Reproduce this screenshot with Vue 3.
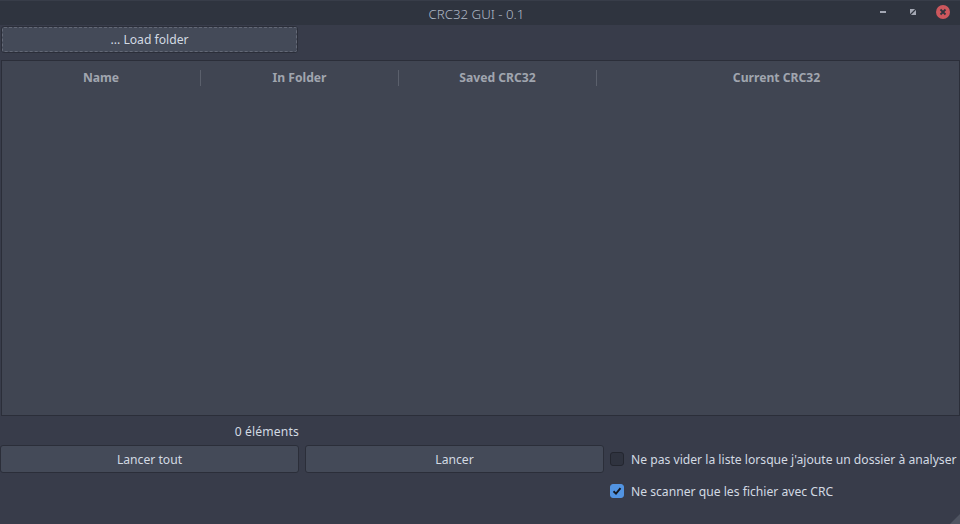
<template>
  <div class="window">
    <header class="titlebar">
      <span class="title">CRC32 GUI - 0.1</span>
      <div class="controls">
        <svg class="ctl" width="12" height="12" viewBox="0 0 12 12"><rect x="4" y="5" width="6" height="2" fill="#a3a7b3" /></svg>
        <svg class="ctl" width="12" height="12" viewBox="0 0 12 12">
          <rect x="4" y="3" width="6" height="6" fill="#a3a7b3" />
          <path d="M3.5 9.5L10.5 2.5" stroke="#2f343f" stroke-width="1.2" />
        </svg>
        <svg class="close" width="14" height="14" viewBox="0 0 14 14">
          <circle cx="7" cy="7" r="7" fill="#cc575d" />
          <path d="M4.5 4.5L9.5 9.5M9.5 4.5L4.5 9.5" stroke="#2f343f" stroke-width="1.8" />
        </svg>
      </div>
    </header>
    <main class="content">
      <div class="top-row">
        <button class="btn load">... Load folder</button>
      </div>
      <section class="table">
        <div class="thead">
          <div v-for="c in columns" :key="c.name" class="th" :style="{ width: c.width + 'px' }">{{ c.name }}</div>
        </div>
      </section>
      <div class="count-row"><span class="count">0 éléments</span></div>
      <div class="bottom">
        <div class="actions">
          <button class="btn action">Lancer tout</button>
          <button class="btn action">Lancer</button>
        </div>
        <div class="options">
          <label class="opt">
            <span class="box"></span>
            <span>Ne pas vider la liste lorsque j'ajoute un dossier à analyser</span>
          </label>
          <label class="opt">
            <span class="box checked">
              <svg width="10" height="10" viewBox="0 0 10 10"><path d="M1.5 5.2L4 7.6L8.5 2.2" fill="none" stroke="#15181f" stroke-width="1.9" /></svg>
            </span>
            <span>Ne scanner que les fichier avec CRC</span>
          </label>
        </div>
      </div>
      <div class="grip"></div>
    </main>
  </div>
</template>

<script setup>
const columns = [
  { name: 'Name', width: 199 },
  { name: 'In Folder', width: 198 },
  { name: 'Saved CRC32', width: 198 },
  { name: 'Current CRC32', width: 359 },
]
</script>

<style>
html, body { margin: 0; background: #383c4a; }
</style>

<style scoped>
.window {
  width: 960px;
  height: 524px;
  display: flex;
  flex-direction: column;
  background: #383c4a;
  font-family: "Noto Sans", sans-serif;
  font-size: 12.15px;
  color: #d3dae3;
  overflow: hidden;
}
.titlebar {
  height: 25px;
  flex: none;
  position: relative;
  display: flex;
  align-items: center;
  justify-content: center;
  background: #2f343f;
  border-top: 1px solid #383d49;
  box-sizing: border-box;
}
.title {
  color: #afb8c6;
  font-size: 13.25px;
  font-weight: 300;
  margin-top: 2px;
  margin-right: 7px;
}
.controls {
  position: absolute;
  right: 10px;
  top: 4px;
  display: flex;
  align-items: center;
  gap: 18px;
}
.content {
  flex: 1;
  position: relative;
  display: flex;
  flex-direction: column;
  padding: 1px 0 0 1px;
}
.btn {
  box-sizing: border-box;
  height: 28px;
  font: inherit;
  color: #d3dae3;
  background: #444a58;
  border: 1px solid #2b2e39;
  border-radius: 3px;
  padding: 0;
}
.top-row {
  display: flex;
}
.load {
  width: 297px;
  height: 27px;
  outline: 1px dashed #636876;
  outline-offset: -2px;
}
.table {
  margin-top: 7px;
  width: 959px;
  height: 356px;
  box-sizing: border-box;
  background: #404552;
  border: 1px solid #2b2e39;
}
.thead {
  display: flex;
  height: 34px;
  align-items: center;
}
.th {
  box-sizing: border-box;
  height: 16px;
  line-height: 16px;
  text-align: center;
  font-weight: 700;
  color: #a0a5af;
  border-right: 1px solid #5b606c;
}
.th:last-child { border-right: 0; }
.count-row {
  height: 29px;
  padding-top: 1px;
  box-sizing: border-box;
  display: flex;
  align-items: center;
  width: 298px;
  justify-content: flex-end;
}
.count {
  letter-spacing: 0.15px;
}
.bottom {
  display: flex;
  margin-left: -1px;
}
.actions {
  display: flex;
  gap: 6px;
  width: 604px;
  flex: none;
  height: 28px;
}
.action { width: 299px; }
.options {
  margin-left: 6px;
  display: flex;
  flex-direction: column;
  gap: 18px;
}
.opt {
  display: flex;
  align-items: center;
  gap: 7px;
  height: 14px;
  white-space: nowrap;
  position: relative;
  top: 7px;
}
.box {
  width: 14px;
  height: 14px;
  box-sizing: border-box;
  flex: none;
  background: #2f333f;
  border: 1px solid #23262f;
  border-radius: 3px;
  display: flex;
  align-items: center;
  justify-content: center;
}
.checked {
  background: #5294e2;
  border-color: #5294e2;
}
.grip {
  position: absolute;
  right: 0;
  bottom: 0;
  width: 0;
  height: 0;
  border-style: solid;
  border-width: 0 0 10px 10px;
  border-color: transparent transparent #4f5461 transparent;
}
</style>
